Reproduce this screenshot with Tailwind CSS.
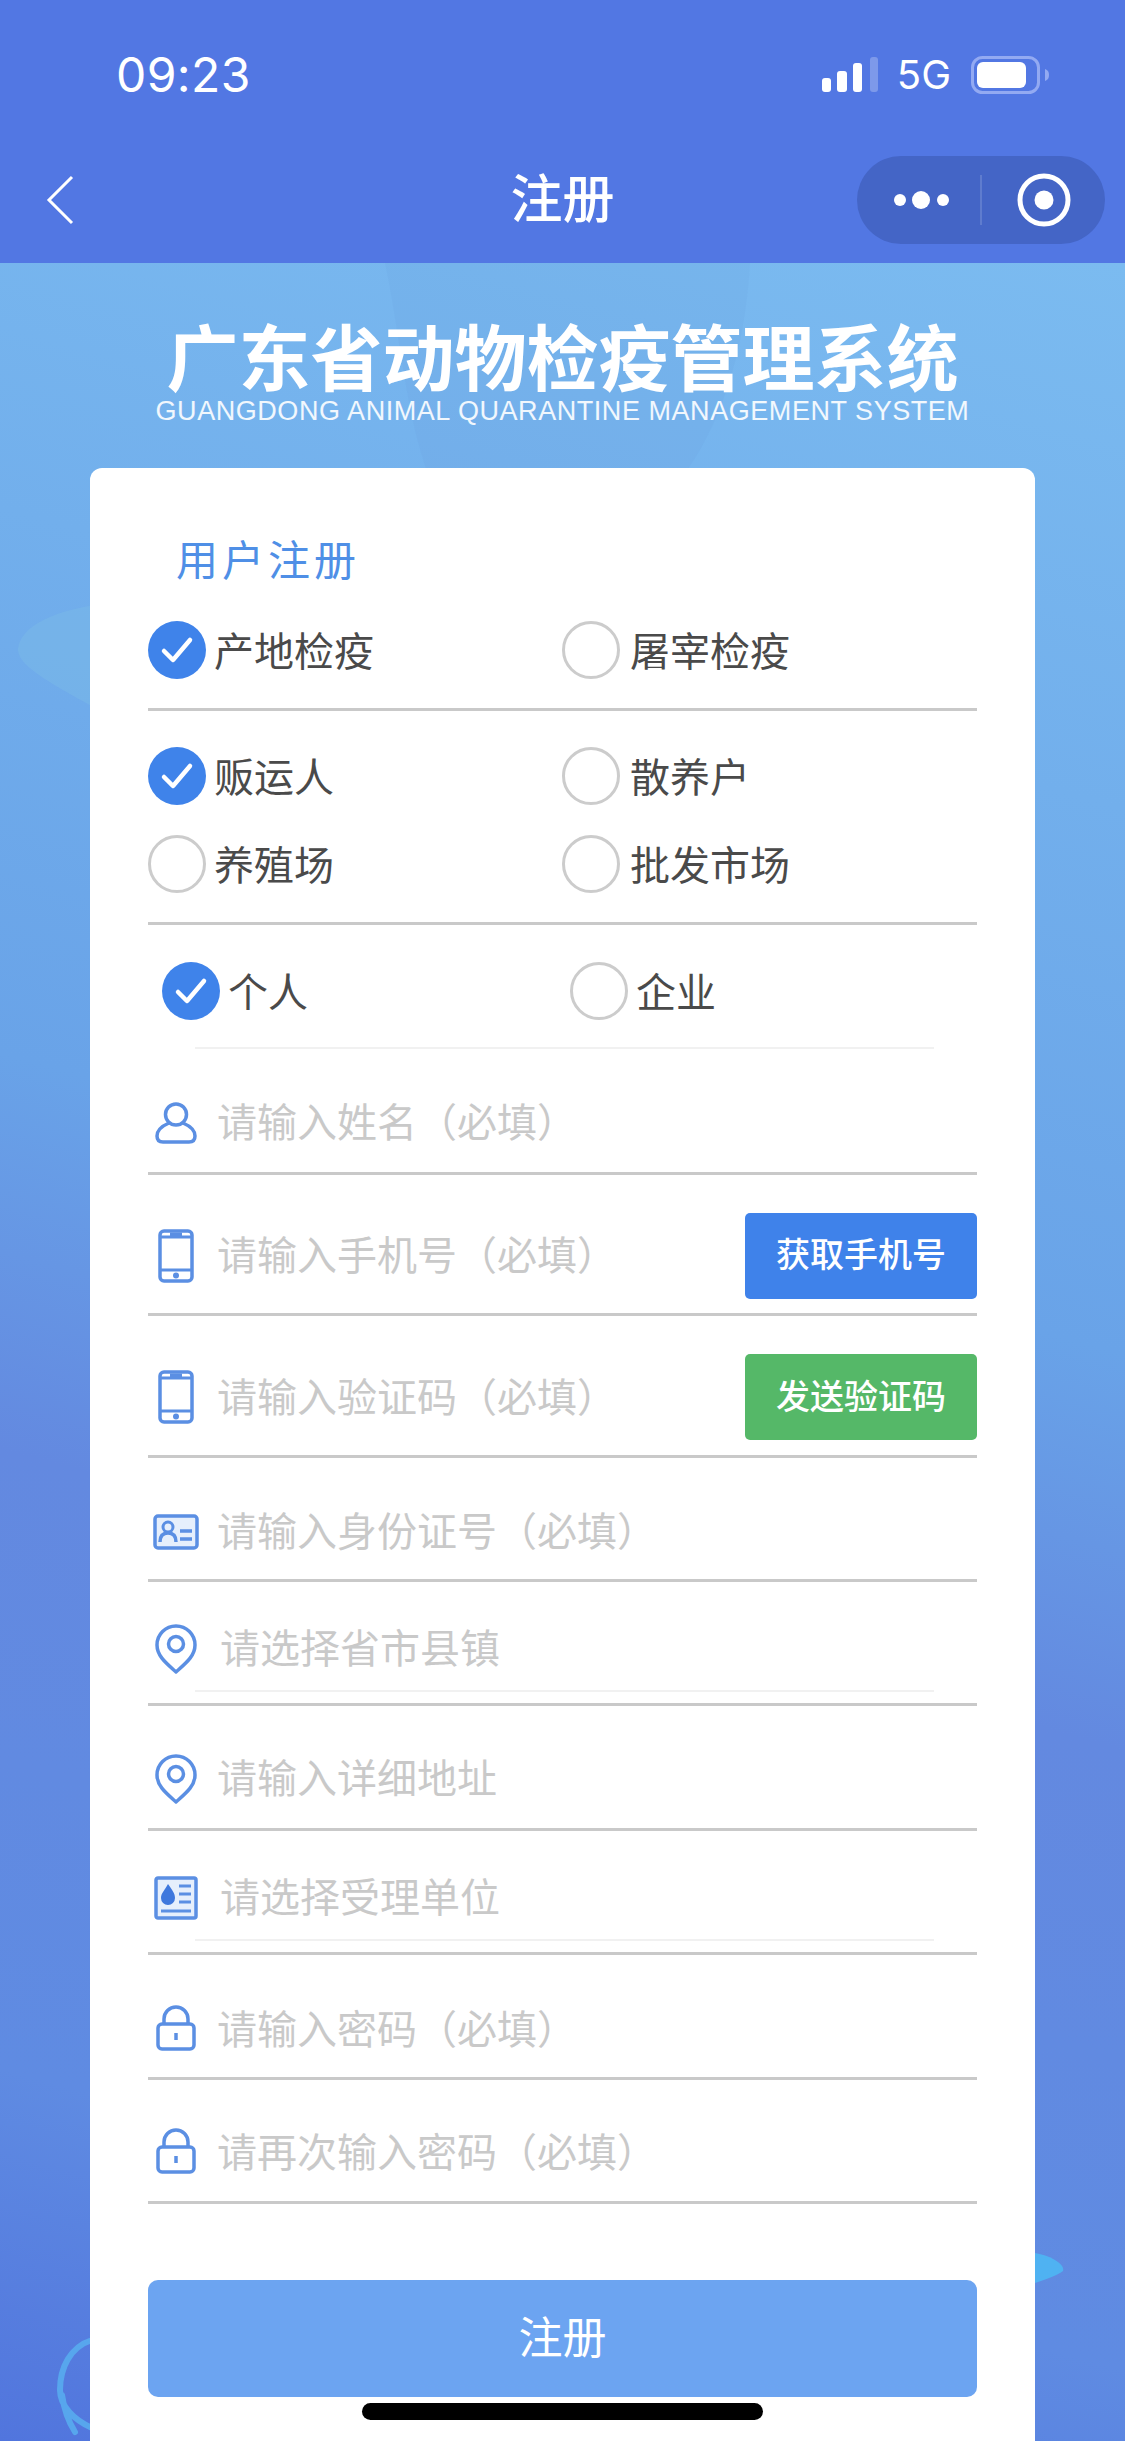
<!DOCTYPE html>
<html lang="zh-CN">
<head>
    <meta charset="UTF-8">
    <meta name="viewport" content="width=device-width, initial-scale=1.0">
    <title>注册</title>
    <script src="https://cdn.jsdelivr.net/npm/@tailwindcss/browser@4"></script>
</head>
<body class="bg-[#5277e3] font-['Noto_Sans_CJK_SC','Liberation_Sans',sans-serif]">
    <!-- Shared icons -->
    <svg class="hidden">
        <symbol id="phone" viewBox="0 0 36 54">
            <rect x="2" y="2" width="32" height="50" rx="4" fill="none" stroke="currentColor" stroke-width="3.500"/>
            <path d="M2 8h32M2 41h32M12 5h12" fill="none" stroke="currentColor" stroke-width="3"/>
            <circle cx="18" cy="46.500" r="3" fill="currentColor"/>
        </symbol>
        <symbol id="pin" viewBox="0 0 42 50">
            <path d="M21 48C11 39 2 32 2 21a19 19 0 0 1 38 0C40 32 31 39 21 48Z" fill="none" stroke="currentColor" stroke-width="3.500" stroke-linejoin="round"/>
            <circle cx="21" cy="20" r="7.500" fill="none" stroke="currentColor" stroke-width="3.500"/>
        </symbol>
        <symbol id="lock" viewBox="0 0 40 46">
            <rect x="2" y="19" width="36" height="25" rx="4" fill="none" stroke="currentColor" stroke-width="3.500"/>
            <path d="M8 19v-5a12 12 0 0 1 24 0v5" fill="none" stroke="currentColor" stroke-width="3.500"/>
            <path d="M20 28v7" fill="none" stroke="currentColor" stroke-width="3.500"/>
        </symbol>
        <symbol id="checked" viewBox="0 0 58 58">
            <circle cx="29" cy="29" r="29" fill="#3f83ea"/>
            <path d="M16 30l9 9 17-20" fill="none" stroke="#fff" stroke-width="4.500" stroke-linecap="round" stroke-linejoin="round"/>
        </symbol>
        <symbol id="unchecked" viewBox="0 0 58 58">
            <circle cx="29" cy="29" r="27.500" fill="#fff" stroke="#cccccc" stroke-width="3"/>
        </symbol>
    </svg>

    <div class="relative w-[1125px] h-[2441px] overflow-hidden">
        <!-- Status bar -->
        <div class="flex items-center h-[150px] pl-[116px] pr-[76px] text-white font-['Inter','Liberation_Sans',sans-serif]">
            <span class="text-[48px] tracking-[0.4px]">09:23</span>
            <svg class="ml-auto" width="56" height="36" viewBox="0 0 56 36">
                <rect x="0" y="21" width="9" height="14" rx="3" fill="#fff"/>
                <rect x="15" y="14" width="10" height="21" rx="3" fill="#fff"/>
                <rect x="31" y="6" width="9" height="29" rx="3" fill="#fff"/>
                <rect x="48" y="0" width="8" height="35" rx="3" fill="#fff" fill-opacity="0.25"/>
            </svg>
            <span class="ml-[19px] text-[40px] leading-none">5G</span>
            <svg class="ml-[20px]" width="78" height="38" viewBox="0 0 78 38">
                <rect x="1.500" y="1.500" width="66" height="35" rx="10" fill="none" stroke="#93aaf2" stroke-width="3"/>
                <rect x="6" y="6" width="49" height="26" rx="6" fill="#fff"/>
                <path d="M74 13c3 1 4 3 4 6s-1 5-4 6Z" fill="#93aaf2"/>
            </svg>
        </div>

        <!-- Navigation bar -->
        <div class="grid grid-cols-[1fr_auto_1fr] items-center h-[113px] pb-[14px]">
            <svg class="ml-[46px]" width="28" height="50" viewBox="0 0 28 50">
                <path d="M26 2L3 25l23 23" fill="none" stroke="#fff" stroke-width="3"/>
            </svg>
            <h1 class="mb-[8px] text-[52px] leading-none font-medium text-white">注册</h1>
            <div class="justify-self-end flex items-center w-[248px] h-[88px] mr-[20px] rounded-full bg-[#4465c6]">
                <svg class="ml-[37px]" width="60" height="20" viewBox="0 0 60 20">
                    <circle cx="6" cy="10" r="6" fill="#fff"/>
                    <circle cx="27" cy="10" r="9" fill="#fff"/>
                    <circle cx="49" cy="10" r="6" fill="#fff"/>
                </svg>
                <div class="ml-[26px] w-[2px] h-[50px] bg-white/15"></div>
                <svg class="ml-[35px]" width="54" height="54" viewBox="0 0 54 54">
                    <circle cx="27" cy="27" r="24" fill="none" stroke="#fff" stroke-width="5"/>
                    <circle cx="27" cy="27" r="9.500" fill="#fff"/>
                </svg>
            </div>
        </div>

        <!-- Page body -->
        <main class="relative h-[2178px] overflow-hidden bg-[linear-gradient(195deg,#7bbbf0_0%,#69a3e8_44%,#6389e0_60%,#5f8be2_85%,#5175dd_100%)]">
            <!-- Background decoration, sits behind the card -->
            <svg class="absolute inset-0" width="1125" height="2178" viewBox="0 0 1125 2178">
                <path d="M385 0h365c-5 90-30 165-70 217H430C405 150 400 70 385 0Z" fill="#5f8fdc" fill-opacity="0.1"/>
                <path d="M120 340C70 342 22 358 18 385c-2 16 30 34 70 56 30 16 60 32 90 40V340Z" fill="#7cbde8" fill-opacity="0.42"/>
                <path d="M1035 1990c18 3 30 12 28 18-5 4-16 8-28 12Z" fill="#4fb2f2"/>
                <path d="M92 2077C70 2084 60 2105 60 2127c0 16 14 30 32 38M62 2132c2 14 6 26 13 37" fill="none" stroke="#58aef0" stroke-width="6" stroke-linecap="round" stroke-opacity="0.85"/>
            </svg>

            <div class="relative pt-[51px] text-center text-white">
                <div class="text-[72px] leading-[80px] font-bold">广东省动物检疫管理系统</div>
                <div class="mt-[2px] text-[27px] leading-[30px] tracking-[0.55px] text-white/90 font-['Liberation_Sans',sans-serif]">GUANGDONG ANIMAL QUARANTINE MANAGEMENT SYSTEM</div>
            </div>

            <!-- Registration card -->
            <section class="relative mt-[42px] mx-[90px] h-[2000px] rounded-t-[12px] bg-white px-[58px] pt-[60px]">
                <h2 class="h-[61px] pl-[28px] text-[42px] leading-[60px] tracking-[4px] text-[#4f8fe6]">用户注册</h2>

                <!-- Inspection type -->
                <div class="pt-[32px] pb-[29px] border-b-[3px] border-[#c9c9c9] grid grid-cols-[414px_1fr] text-[40px] leading-[58px] text-[#4a4a4a]">
                    <label class="flex items-center gap-[8px]"><svg width="58" height="58"><use href="#checked"/></svg><span class="-mt-[3px]">产地检疫</span></label>
                    <label class="flex items-center gap-[10px]"><svg width="58" height="58"><use href="#unchecked"/></svg><span class="-mt-[3px]">屠宰检疫</span></label>
                </div>

                <!-- Applicant role -->
                <div class="pt-[36px] pb-[29px] border-b-[3px] border-[#c9c9c9] grid grid-cols-[414px_1fr] gap-y-[30px] text-[40px] leading-[58px] text-[#4a4a4a]">
                    <label class="flex items-center gap-[8px]"><svg width="58" height="58"><use href="#checked"/></svg><span class="-mt-[3px]">贩运人</span></label>
                    <label class="flex items-center gap-[10px]"><svg width="58" height="58"><use href="#unchecked"/></svg><span class="-mt-[3px]">散养户</span></label>
                    <label class="flex items-center gap-[8px]"><svg width="58" height="58"><use href="#unchecked"/></svg><span class="-mt-[3px]">养殖场</span></label>
                    <label class="flex items-center gap-[10px]"><svg width="58" height="58"><use href="#unchecked"/></svg><span class="-mt-[3px]">批发市场</span></label>
                </div>

                <!-- Personal or company -->
                <div class="pt-[37px] pb-[27px] pl-[14px] grid grid-cols-[408px_1fr] text-[40px] leading-[58px] text-[#4a4a4a]">
                    <label class="flex items-center gap-[8px]"><svg width="58" height="58"><use href="#checked"/></svg><span class="-mt-[3px]">个人</span></label>
                    <label class="flex items-center gap-[8px]"><svg width="58" height="58"><use href="#unchecked"/></svg><span class="-mt-[3px]">企业</span></label>
                </div>
                <div class="ml-[47px] mr-[43px] h-[2px] bg-[#f1f1f1]"></div>

                <!-- Input rows -->
                <div class="text-[40px] leading-[56px] text-[#c9c9c9]">
                    <div class="flex items-center h-[126px] pt-[25px] border-b-[3px] border-[#c9c9c9]">
                        <div class="flex justify-center w-[56px] mr-[13px] text-[#5b8fe3]">
                            <svg width="42" height="42" viewBox="0 0 42 42">
                                <circle cx="21" cy="12.500" r="10.500" fill="none" stroke="currentColor" stroke-width="3.500"/>
                                <path d="M14 21C7 24 2 28 2 34c0 4 2 6 6 6h26c4 0 6-2 6-6 0-6-5-10-12-13" fill="none" stroke="currentColor" stroke-width="3.500"/>
                            </svg>
                        </div>
                        <span class="mb-[6px]">请输入姓名（必填）</span>
                    </div>

                    <div class="flex items-center h-[141px] pt-[23px] border-b-[3px] border-[#c9c9c9]">
                        <div class="flex justify-center w-[56px] mr-[13px] text-[#5b8fe3]"><svg width="36" height="54"><use href="#phone"/></svg></div>
                        <span class="mb-[6px]">请输入手机号（必填）</span>
                        <button class="ml-auto w-[232px] h-[86px] pb-[5px] rounded-[5px] bg-[#3f82ea] text-[34px] font-medium text-white">获取手机号</button>
                    </div>

                    <div class="flex items-center h-[142px] pt-[22px] border-b-[3px] border-[#c9c9c9]">
                        <div class="flex justify-center w-[56px] mr-[13px] text-[#5b8fe3]"><svg width="36" height="54"><use href="#phone"/></svg></div>
                        <span class="mb-[4px]">请输入验证码（必填）</span>
                        <button class="ml-auto w-[232px] h-[86px] pb-[4px] rounded-[5px] bg-[#55b868] text-[34px] font-medium text-white">发送验证码</button>
                    </div>

                    <div class="flex items-center h-[124px] pt-[27px] border-b-[3px] border-[#c9c9c9]">
                        <div class="flex justify-center w-[56px] mr-[13px] text-[#5b8fe3]">
                            <svg width="46" height="36" viewBox="0 0 46 36">
                                <rect x="2" y="2" width="42" height="32" rx="3" fill="#e6effc" stroke="currentColor" stroke-width="3.500"/>
                                <circle cx="15" cy="13" r="5" fill="none" stroke="currentColor" stroke-width="3"/>
                                <path d="M7 28c0-6 3-9 8-9s8 3 8 9M27 17h12M27 25h12" fill="none" stroke="currentColor" stroke-width="3.500"/>
                            </svg>
                        </div>
                        <span class="mb-[6px]">请输入身份证号（必填）</span>
                    </div>

                    <div class="flex flex-col h-[124px] pt-[37px] border-b-[3px] border-[#c9c9c9]">
                        <div class="flex items-center h-[60px]">
                            <div class="flex justify-center w-[56px] mr-[16px] text-[#5b8fe3]"><svg width="42" height="50"><use href="#pin"/></svg></div>
                            <span class="mb-[6px]">请选择省市县镇</span>
                        </div>
                        <div class="mt-[11px] ml-[47px] mr-[43px] h-[2px] bg-[#f1f1f1]"></div>
                    </div>

                    <div class="flex items-center h-[125px] pt-[24px] border-b-[3px] border-[#c9c9c9]">
                        <div class="flex justify-center w-[56px] mr-[13px] text-[#5b8fe3]"><svg width="42" height="50"><use href="#pin"/></svg></div>
                        <span class="mb-[6px]">请输入详细地址</span>
                    </div>

                    <div class="flex flex-col h-[124px] pt-[37px] border-b-[3px] border-[#c9c9c9]">
                        <div class="flex items-center h-[60px]">
                            <div class="flex justify-center w-[56px] mr-[16px] text-[#5b8fe3]">
                                <svg width="44" height="44" viewBox="0 0 44 44">
                                    <rect x="2" y="2" width="40" height="40" rx="2" fill="#e6effc" stroke="currentColor" stroke-width="3.500"/>
                                    <path d="M14 8c4 6 7 9 7 14a7 7 0 0 1-14 0c0-5 4-8 7-14Z" fill="#3f78dd"/>
                                    <path d="M25 10h12M25 18h12M25 26h12M7 35h30" fill="none" stroke="currentColor" stroke-width="3"/>
                                </svg>
                            </div>
                            <span class="mb-[6px]">请选择受理单位</span>
                        </div>
                        <div class="mt-[11px] ml-[47px] mr-[43px] h-[2px] bg-[#f1f1f1]"></div>
                    </div>

                    <div class="flex items-center h-[125px] pt-[28px] border-b-[3px] border-[#c9c9c9]">
                        <div class="flex justify-center w-[56px] mr-[13px] mb-[5px] text-[#5b8fe3]"><svg width="40" height="46"><use href="#lock"/></svg></div>
                        <span class="mb-[6px]">请输入密码（必填）</span>
                    </div>

                    <div class="flex items-center h-[124px] pt-[25px] border-b-[3px] border-[#c9c9c9]">
                        <div class="flex justify-center w-[56px] mr-[13px] mb-[5px] text-[#5b8fe3]"><svg width="40" height="46"><use href="#lock"/></svg></div>
                        <span class="mb-[6px]">请再次输入密码（必填）</span>
                    </div>
                </div>

                <button class="mt-[76px] w-full h-[117px] pb-[7px] rounded-[10px] bg-[#6ca4f1] text-[44px] text-white">注册</button>
            </section>
        </main>

        <!-- Home indicator -->
        <div class="absolute left-[362px] top-[2403px] w-[401px] h-[17px] rounded-full bg-black"></div>
    </div>
</body>
</html>
